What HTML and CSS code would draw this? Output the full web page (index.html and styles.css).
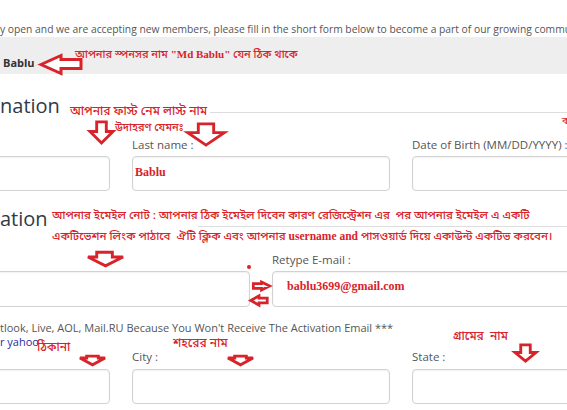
FILE: index.html
```html
<!DOCTYPE html>
<html lang="bn">
<head>
  <meta charset="UTF-8">
  <meta name="viewport" content="width=device-width, initial-scale=1.0">
  <title>Registration</title>
  <link rel="stylesheet" href="styles.css">
</head>
<body>
  <div class="page">
    <p class="intro">y open and we are accepting new members, please fill in the short form below to become a part of our growing community.</p>

    <div class="sponsor"><b>Bablu</b></div>

    <h2 class="section-title"><span>nation</span></h2>

    <div class="row three">
      <div class="field">
        <label>First name :</label>
        <div class="input"></div>
      </div>
      <div class="field">
        <label>Last name :</label>
        <div class="input"><span class="typed typed-name">Bablu</span></div>
      </div>
      <div class="field">
        <label>Date of Birth (MM/DD/YYYY) :</label>
        <div class="input"></div>
      </div>
    </div>

    <h2 class="section-title second"><span>ation</span></h2>

    <div class="row two">
      <div class="field">
        <label>E-mail :</label>
        <div class="input tall"></div>
      </div>
      <div class="field">
        <label>Retype E-mail :</label>
        <div class="input tall"><span class="typed typed-email">bablu3699@gmail.com</span></div>
      </div>
    </div>

    <p class="notice">tlook, Live, AOL, Mail.RU Because You Won't Receive The Activation Email ***<br><a href="#">r yahoo</a></p>

    <div class="row three last">
      <div class="field">
        <label>Address :</label>
        <div class="input"></div>
      </div>
      <div class="field">
        <label>City :</label>
        <div class="input"></div>
      </div>
      <div class="field">
        <label>State :</label>
        <div class="input"></div>
      </div>
    </div>

    <div class="footer-bar"></div>

    <!-- red notes drawn over the form -->
    <div class="notes">
      <div class="note n-sponsor">আপনার স্পনসর নাম <b>"Md Bablu"</b> যেন ঠিক থাকে</div>
      <svg class="arrow a-sponsor" viewBox="0 0 44 21"><path d="M2 10.5 L22 1.5 V5.5 H42 V14.5 H22 V19.5 Z"/></svg>

      <div class="note n-name">আপনার ফাস্ট নেম লাস্ট নাম</div>
      <div class="note n-example">উদাহরণ যেমনঃ</div>
      <svg class="arrow a-first" viewBox="0 0 28 26"><path d="M9 2 H19 V12 H26 L14 24 L2 12 H9 Z"/></svg>
      <svg class="arrow a-last" viewBox="0 0 42 26"><path d="M13 2 H29 V11 H40 L21 24 L2 11 H13 Z"/></svg>
      <div class="note n-cut">ক</div>

      <div class="note n-email">আপনার ইমেইল নোট : আপনার ঠিক ইমেইল দিবেন কারণ রেজিস্ট্রেশন এর &nbsp;পর আপনার ইমেইল এ একটি<br>একটিভেশন লিংক পাঠাবে &nbsp;ঐটি ক্লিক এবং আপনার <b>username and</b> পাসওয়ার্ড দিয়ে একাউন্ট একটিভ করবেন।</div>
      <svg class="arrow a-email" viewBox="0 0 40 18"><path d="M11 2 H27 V7 H38 L20 16 L2 7 H11 Z"/></svg>
      <span class="dot"></span>
      <svg class="arrow a-right" viewBox="0 0 22 11"><path d="M2 3 H11 V1 L20 5.5 L11 10 V8 H2 Z"/></svg>
      <svg class="arrow a-left" viewBox="0 0 22 12"><path d="M2 6 L11 1 V3.5 H20 V8.5 H11 V11 Z"/></svg>

      <div class="note n-address">ঠিকানা</div>
      <svg class="arrow a-address" viewBox="0 0 30 12"><path d="M9 2 H21 V4 H28 L15 11 L2 4 H9 Z"/></svg>
      <div class="note n-city">শহরের নাম</div>
      <svg class="arrow a-city" viewBox="0 0 30 12"><path d="M9 2 H21 V4 H28 L15 11 L2 4 H9 Z"/></svg>
      <div class="note n-state">গ্রামের &nbsp;নাম</div>
      <svg class="arrow a-state" viewBox="0 0 26 21"><path d="M8 2 H18 V10 H24 L13 19 L2 10 H8 Z"/></svg>
    </div>
  </div>
</body>
</html>
```

FILE: styles.css
```css
* {
  box-sizing: border-box;
}
body, html {
  margin: 0;
  padding: 0;
  background: #fff;
}

.page {
  position: relative;
  width: 567px;
  height: 410px;
  overflow: hidden;
  font-family: "Open Sans", "Liberation Sans", sans-serif;
  color: #555;
}

.intro {
  margin: 22px 0 0 0;
  font-size: 10.3px;
  line-height: 15px;
  white-space: nowrap;
}

.sponsor {
  background: #eee;
  height: 37px;
  padding: 18px 0 0 3px;
  font-size: 11px;
  line-height: 16px;
  color: #333;
}

/* headings with a line running to the right */
.section-title {
  display: flex;
  align-items: flex-end;
  margin: 18px 0 0 0;
  font-size: 20px;
  line-height: 28px;
  font-weight: normal;
  color: #2f3b48;
}
.section-title::after {
  content: "";
  flex: 1;
  height: 1px;
  background: #ddd;
  margin: 0 0 7px 150px;
}
.section-title.second {
  margin-top: 14px;
}
.section-title.second::after {
  margin-bottom: 6px;
}

.row {
  display: grid;
  gap: 22px;
  margin-left: -148px;
  width: 818px;
  margin-top: 17px;
}
.row.three {
  grid-template-columns: repeat(3, 258px);
}
.row.two {
  grid-template-columns: repeat(2, 398px);
  margin-top: 19px;
}
.row.last {
  margin-top: 0;
}

.field label {
  display: block;
  font-size: 11.5px;
  line-height: 16px;
  margin-bottom: 3px;
  white-space: nowrap;
}
.row.last .field label {
  margin-bottom: 4px;
}

.input {
  height: 35px;
  border: 1px solid #d2d2d2;
  border-radius: 4px;
  background: #fff;
  box-shadow: inset 0 1px 2px rgba(0,0,0,0.06);
  display: flex;
  align-items: center;
}
.input.tall {
  height: 36px;
}

.typed {
  font-family: "Liberation Serif", serif;
  font-weight: bold;
  font-size: 12px;
  color: #d8232a;
  margin-bottom: 3px;
}
.typed-name {
  margin-left: 2px;
}
.typed-email {
  margin-left: 14px;
  margin-bottom: 6px;
}

.notice {
  margin: 14px 0 0 0;
  font-size: 11px;
  line-height: 14px;
  white-space: nowrap;
}
.notice a {
  color: #2b2ba6;
  text-decoration: none;
}

.footer-bar {
  margin-top: 6px;
  height: 4px;
  background: #ccc;
}

/* red notes */
.notes {
  position: absolute;
  inset: 0;
  pointer-events: none;
}
.note {
  position: absolute;
  white-space: nowrap;
  color: #d8232a;
  font-family: "Noto Sans Bengali", "Noto Serif Bengali", "Lohit Bengali", "FreeSans", "Liberation Serif", serif;
  font-size: 12px;
  font-weight: 500;
  line-height: 14px;
}
.note b {
  font-family: "Liberation Serif", serif;
}
.arrow {
  position: absolute;
  overflow: visible;
}
.arrow path {
  fill: #fff;
  stroke: #d8232a;
  stroke-width: 3;
  stroke-linejoin: miter;
}

.n-sponsor { left: 75px; top: 47px; font-size: 11px; }
.a-sponsor { left: 39px; top: 54px; width: 44px; height: 21px; }

.n-name { left: 70px; top: 105px; }
.n-example { left: 115px; top: 121px; font-size: 11px; }
.a-first { left: 88px; top: 120px; width: 27px; height: 25px; }
.a-last { left: 185px; top: 122px; width: 42px; height: 25px; }
.n-cut { left: 562px; top: 115px; font-size: 10px; }

.n-email { left: 52px; top: 206px; font-size: 11.5px; line-height: 20px; }
.a-email { left: 86px; top: 250px; width: 39px; height: 18px; }
.dot {
  position: absolute;
  left: 247px;
  top: 265px;
  width: 4px;
  height: 4px;
  border-radius: 50%;
  background: #d8232a;
}
.a-right { left: 251px; top: 281px; width: 21px; height: 10px; }
.a-left { left: 248px; top: 295px; width: 22px; height: 11px; }

.n-address { left: 37px; top: 341px; }
.a-address { left: 78px; top: 354px; width: 29px; height: 12px; }
.n-city { left: 173px; top: 337px; }
.a-city { left: 226px; top: 354px; width: 29px; height: 12px; }
.n-state { left: 453px; top: 330px; }
.a-state { left: 513px; top: 343px; width: 25px; height: 20px; }
```
